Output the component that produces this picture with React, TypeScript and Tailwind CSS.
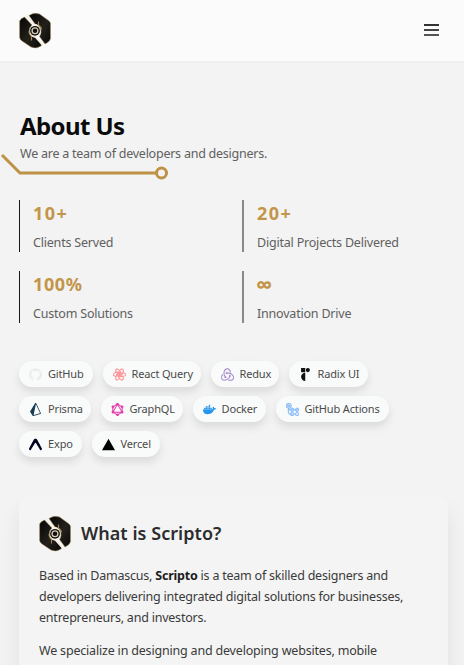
import type { ReactNode } from "react";
import {
  SiGithub, SiReactquery, SiRedux, SiRadixui, SiPrisma, SiGraphql, SiDocker, SiGithubactions, SiExpo, SiVercel,
} from "react-icons/si";

function Logo({ id, className }: { id: string; className: string }) {
  return (
    <svg viewBox="0 0 32 36" className={className} fill="none">
      <defs>
        <linearGradient id={id} x1="0" y1="0" x2="1" y2="1">
          <stop offset="0" stopColor="#050505" />
          <stop offset="0.55" stopColor="#24211c" />
          <stop offset="1" stopColor="#080808" />
        </linearGradient>
      </defs>
      <g fill={`url(#${id})`} stroke="#a98c58" strokeWidth="0.5" strokeLinejoin="round">
        <path d="M5.500 4.500Q1.500 6 .6 8.500V25Q1 27 3 28.500L12 34.500Q17 37 22 33.500L22.500 32.500L16 24.500Q11 24 10.300 18.500Q10.500 14.500 13 12.500Z" />
        <path d="M10 3Q15-.5 20.500 1.500L29.500 8Q31.500 9.500 31.500 11V26Q31 29 26 31.500L20.500 24Q23 20.500 21.500 16Q19.500 12 16 11.500Z" />
      </g>
      <path d="M7.500 3.500L15 12Q19.500 12.500 21 16.500M10.500 19Q11.500 23.500 16.500 24.500L24 32.500" stroke="#f4efe5" strokeWidth="1.700" />
      <circle cx="16" cy="18.300" r="4.900" fill="#11100e" />
      <circle cx="16" cy="18.300" r="2.900" stroke="#d8ccb6" strokeWidth="1.300" />
      <path d="M19.500 9v3.500q3 2 3 4.500M12.500 28v-4q-2.500-2-2.500-5" stroke="#a58652" strokeWidth="1.100" />
    </svg>
  );
}

const stats = [
  { value: "10+", label: "Clients Served", valueClass: "text-[18px] tracking-[1.4px]", border: "border-l border-[#171717]" },
  { value: "20+", label: "Digital Projects Delivered", valueClass: "text-[18px] tracking-[1.4px]", border: "border-l-2 border-[#8a8a8a]" },
  { value: "100%", label: "Custom Solutions", valueClass: "text-[18px] tracking-[0.6px]", border: "border-l border-[#171717]" },
  { value: "∞", label: "Innovation Drive", valueClass: "text-[23px] -ml-px", border: "border-l-2 border-[#8a8a8a]" },
];

function Pill({ icon, width, children }: { icon: ReactNode; width: string; children: string }) {
  return (
    <li className={`flex h-[26px] shrink-0 items-center gap-[6px] rounded-full bg-[#f9fbfa] pl-[10px] text-[11px] leading-[18px] tracking-[-0.15px] whitespace-nowrap text-[#4a4a4a] shadow-[0_5px_9px_rgba(0,0,0,0.1)] ${width}`}>
      <span className="flex size-[13px] shrink-0">{icon}</span>
      <span>{children}</span>
    </li>
  );
}

export default function App() {
  return (
    <div className="h-[665px] overflow-hidden bg-[#f3f3f3] font-['Noto_Sans','Open_Sans',sans-serif]">
      <header className="flex h-[63px] items-start justify-between border-b-2 border-[#eeeeee] bg-[#fbfbfb] pt-[12px] pr-[25px] pl-[19px]">
        <Logo id="headerLogo" className="h-[37px] w-[32px]" />
        <button aria-label="Open menu" className="mt-[12px] flex w-[15px] flex-col gap-[3px]">
          <span className="h-[2px] bg-[#333]" />
          <span className="h-[2px] bg-[#444]" />
          <span className="h-[2px] bg-[#555]" />
        </button>
      </header>
      <main className="pt-[46px]">
        <section>
          <div className="pl-[20px]">
            <h1 className="h-[34px] text-[24px] leading-[33px] font-bold tracking-[-0.6px] text-[#0b0b0b]">About Us</h1>
            <p className="h-[21px] text-[12.5px] leading-[21px] tracking-[-0.24px] whitespace-nowrap text-[#606060]">We are a team of developers and designers.</p>
          </div>
          <svg viewBox="0 0 180 30" className="-mt-[12px] block h-[30px] w-[180px]" fill="none" stroke="#bd9245" strokeWidth="3">
            <path d="M2 3L20 21H156" />
            <circle cx="161.500" cy="21" r="5" />
          </svg>
          <dl className="mt-[18px] grid grid-cols-[223px_1fr] gap-y-[19px] pl-[19px]">
            {stats.map((s) => (
              <div key={s.label} className={`h-[52px] pl-[13px] ${s.border}`}>
                <dt className={`h-[28px] leading-[27px] font-bold text-[#c29549] ${s.valueClass}`}>{s.value}</dt>
                <dd className="text-[12.5px] leading-[30px] tracking-[-0.2px] whitespace-nowrap text-[#606060]">{s.label}</dd>
              </div>
            ))}
          </dl>
        </section>
        <section className="mt-[38px] flex flex-col gap-[9px] pl-[19px]">
          <ul className="flex gap-[9.5px]">
            <Pill width="w-[74px]" icon={<SiGithub size={13} color="#ececec" />}>GitHub</Pill>
            <Pill width="w-[98.5px]" icon={<SiReactquery size={13} color="#ff6b74" stroke="#ff9298" strokeWidth={0.7} />}>React Query</Pill>
            <Pill width="w-[68.5px]" icon={<SiRedux size={13} color="#9f80cc" stroke="#b39bd6" strokeWidth={0.5} />}>Redux</Pill>
            <Pill width="w-[79px]" icon={<SiRadixui size={13} color="#111" />}>Radix UI</Pill>
          </ul>
          <ul className="flex gap-[9.5px]">
            <Pill width="w-[72px]" icon={<SiPrisma size={13} color="#173a52" />}>Prisma</Pill>
            <Pill width="w-[82.5px]" icon={<SiGraphql size={13} color="#e535ab" stroke="#e535ab" strokeWidth={0.7} />}>GraphQL</Pill>
            <Pill width="w-[73.5px]" icon={<SiDocker size={13} color="#2496ed" />}>Docker</Pill>
            <Pill width="w-[113px]" icon={<SiGithubactions size={13} color="#79b2f8" stroke="#79b2f8" strokeWidth={0.8} />}>GitHub Actions</Pill>
          </ul>
          <ul className="flex gap-[9.5px]">
            <Pill width="w-[63px]" icon={<SiExpo size={13} color="#000020" />}>Expo</Pill>
            <Pill width="w-[68px]" icon={<SiVercel size={13} color="#000" />}>Vercel</Pill>
          </ul>
        </section>
        <article className="mt-[38px] ml-[19px] h-[240px] w-[429px] rounded-[12px] bg-[#f4f4f4] px-[20px] pt-[20px] shadow-[0_14px_20px_rgba(0,0,0,0.08)]">
          <div className="flex h-[37px] items-center gap-[10px]">
            <Logo id="cardLogo" className="h-[37px] w-[32px]" />
            <h2 className="text-[18px] font-semibold tracking-[0.05px] whitespace-nowrap text-[#2c2c2c]">What is Scripto?</h2>
          </div>
          <p className="mt-[13px] text-[12.5px] leading-[21px] tracking-[-0.22px] whitespace-nowrap text-[#3a3a3a]">
            Based in Damascus, <strong className="text-[#1c1c1c]">Scripto</strong> is a team of skilled designers and<br />
            developers delivering integrated digital solutions for businesses,<br />
            entrepreneurs, and investors.
          </p>
          <p className="mt-[12px] text-[12.5px] leading-[21px] tracking-[-0.19px] whitespace-nowrap text-[#3a3a3a]">
            We specialize in designing and developing websites, mobile
          </p>
        </article>
      </main>
    </div>
  );
}
